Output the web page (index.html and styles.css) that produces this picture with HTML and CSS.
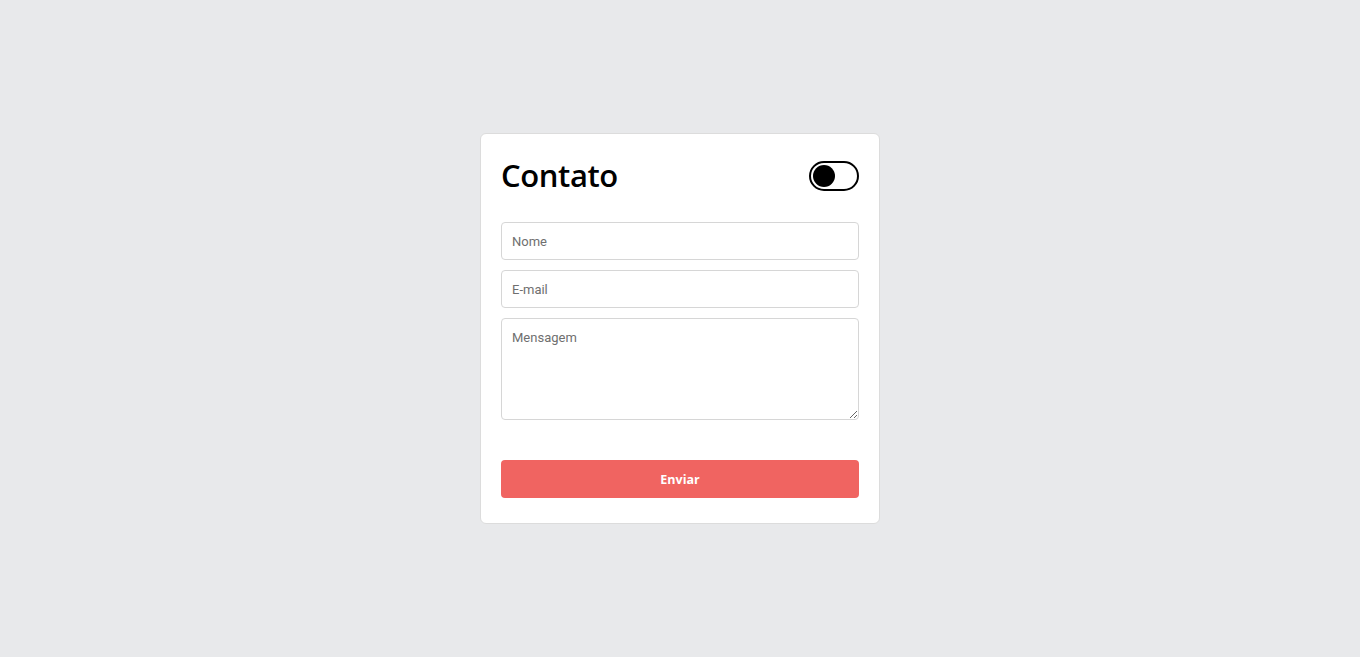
FILE: index.html
```html
<!DOCTYPE html>
<html lang="pt">
<head>
<meta charset="utf-8">
<title>Contato</title>
<link rel="stylesheet" href="styles.css">
</head>
<body>
<main class="page">
  <form class="card">
    <div class="card-header">
      <h1 class="title">Contato</h1>
      <button type="button" class="toggle" aria-label="Alternar tema"><span class="knob"></span></button>
    </div>
    <div class="fields">
      <input class="field" type="text" placeholder="Nome">
      <input class="field" type="email" placeholder="E-mail">
      <textarea class="field area" placeholder="Mensagem"></textarea>
    </div>
    <button type="button" class="submit">Enviar</button>
  </form>
</main>
</body>
</html>
```

FILE: styles.css
```css
* { box-sizing: border-box; }
html, body { margin: 0; padding: 0; }
body {
  background: #e8e9eb;
  font-family: Roboto, "Liberation Sans", sans-serif;
}
.page {
  min-height: 657px;
  height: 100vh;
  display: flex;
  align-items: center;
  justify-content: center;
}
.card {
  width: 400px;
  background: #fff;
  border: 1px solid #dcdcdc;
  border-radius: 6px;
  padding: 20px 20px 25px;
  display: flex;
  flex-direction: column;
}
.card-header {
  display: flex;
  align-items: center;
  justify-content: space-between;
  height: 44px;
  margin-bottom: 24px;
}
.title {
  margin: 0;
  font-family: "Open Sans", Lato, sans-serif;
  font-weight: 600;
  font-size: 31px;
  letter-spacing: -0.4px;
  color: #000;
  line-height: 40px;
  padding-bottom: 3px;
}
.toggle {
  width: 50px;
  height: 30px;
  border: 2px solid #000;
  border-radius: 15px;
  background: #fff;
  padding: 0 0 0 2px;
  display: flex;
  align-items: center;
  cursor: pointer;
}
.knob {
  width: 22px;
  height: 22px;
  border-radius: 50%;
  background: #000;
}
.fields {
  display: flex;
  flex-direction: column;
  gap: 10px;
}
.field {
  display: block;
  width: 100%;
  height: 38px;
  border: 1px solid #d6d6d6;
  border-radius: 4px;
  padding: 0 10px;
  font-family: Roboto, "Liberation Sans", sans-serif;
  font-size: 13px;
  color: #333;
  background: #fff;
}
.field::placeholder { color: #6f6f6f; }
.area {
  height: 102px;
  padding: 11px 10px 10px;
  resize: vertical;
}
.submit {
  margin-top: 40px;
  height: 38px;
  width: 100%;
  border: none;
  border-radius: 4px;
  background: #f06461;
  color: #fff;
  font-family: "Open Sans", Lato, sans-serif;
  font-weight: 700;
  font-size: 12.5px;
  cursor: pointer;
}
```
